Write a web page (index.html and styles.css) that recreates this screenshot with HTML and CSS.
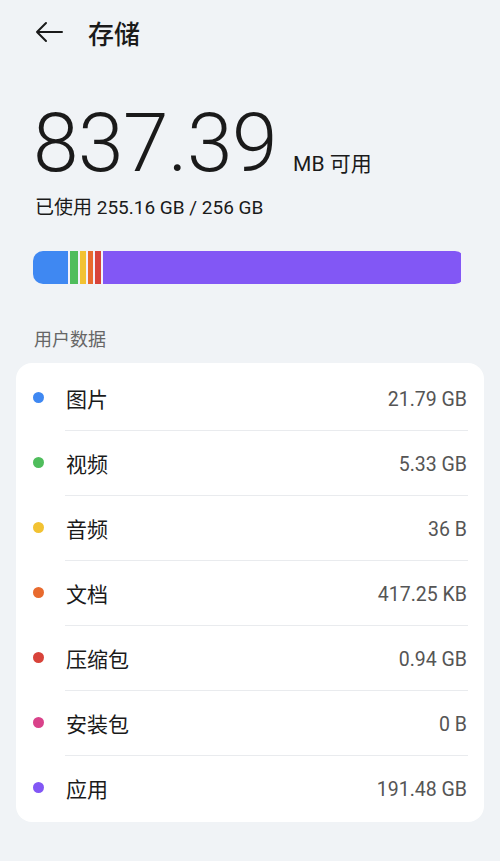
FILE: index.html
```html
<!DOCTYPE html>
<html lang="zh-CN">
<head>
    <meta charset="UTF-8">
    <meta name="viewport" content="width=device-width, initial-scale=1.0">
    <title>存储</title>
    <link rel="stylesheet" href="styles.css">
</head>
<body>
    <div id="app">
        <div class="header">
            <svg class="back" width="28" height="22" viewBox="0 0 28 22">
                <path d="M27 11H2M11 2L2 11L11 20" fill="none" stroke="#1a1a1a" stroke-width="2" stroke-linecap="round" stroke-linejoin="round"/>
            </svg>
            <h1>存储</h1>
        </div>

        <div class="summary">
            <div class="free">
                <span class="free-num">837.39</span>
                <span class="free-unit">MB 可用</span>
            </div>
            <p class="used">已使用 255.16 GB / 256 GB</p>
        </div>

        <div class="bar">
            <span class="seg" style="width: 35px; background: #3f88f2;"></span>
            <span class="seg" style="width: 8px; background: #4fbd5c;"></span>
            <span class="seg" style="width: 6px; background: #f2c232;"></span>
            <span class="seg" style="width: 5px; background: #e86a2e;"></span>
            <span class="seg" style="width: 6px; background: #d8433a;"></span>
            <span class="seg" style="width: 358px; background: #8257f5;"></span>
        </div>

        <p class="section-title">用户数据</p>

        <div class="card">
            <div class="row"><span class="dot" style="background: #3f88f2;"></span><span class="label">图片</span><span class="value">21.79 GB</span></div>
            <div class="row"><span class="dot" style="background: #4fbd5c;"></span><span class="label">视频</span><span class="value">5.33 GB</span></div>
            <div class="row"><span class="dot" style="background: #f2c232;"></span><span class="label">音频</span><span class="value">36 B</span></div>
            <div class="row"><span class="dot" style="background: #e86a2e;"></span><span class="label">文档</span><span class="value">417.25 KB</span></div>
            <div class="row"><span class="dot" style="background: #d8433a;"></span><span class="label">压缩包</span><span class="value">0.94 GB</span></div>
            <div class="row"><span class="dot" style="background: #d9428a;"></span><span class="label">安装包</span><span class="value">0 B</span></div>
            <div class="row"><span class="dot" style="background: #8257f5;"></span><span class="label">应用</span><span class="value">191.48 GB</span></div>
        </div>
    </div>
</body>
</html>
```

FILE: styles.css
```css
/* General Styles */
body {
    font-family: Roboto, "Noto Sans CJK SC", sans-serif;
    background-color: #f0f3f6;
    color: #1a1a1a;
    margin: 0;
    padding: 0;
}

#app {
    width: 500px;
    height: 861px;
    box-sizing: border-box;
    padding: 0 16px;
}

.header {
    display: flex;
    align-items: center;
    height: 64px;
    padding-left: 19px;
}

.back {
    display: block;
    margin-right: 25px;
}

h1 {
    margin: 0;
    font-size: 26px;
    font-weight: 500;
    font-family: "Noto Sans CJK SC", sans-serif;
}

.summary {
    padding: 32px 0 0 19px;
}

.free {
    display: flex;
    align-items: baseline;
    height: 94px;
}

.free-num {
    margin-left: -2px;
    font-size: 82px;
    font-weight: 300;
    letter-spacing: -0.5px;
    line-height: 94px;
}

.free-unit {
    margin-left: 16px;
    font-size: 21px;
}

.used {
    margin: 6px 0 0;
    font-size: 19px;
    line-height: 24px;
}

.bar {
    display: flex;
    gap: 2px;
    height: 33px;
    margin: 31px 19px 0 17px;
    background-color: #f3f1fb;
    border-radius: 10px;
    overflow: hidden;
}

.seg {
    display: block;
    height: 100%;
}

.section-title {
    margin: 44px 0 0 18px;
    font-size: 18px;
    line-height: 24px;
    color: #666666;
}

.card {
    margin-top: 11px;
    padding: 2px 0;
    background-color: #ffffff;
    border-radius: 16px;
}

.row {
    display: flex;
    align-items: center;
    height: 65px;
    position: relative;
}

.row + .row::before {
    content: "";
    position: absolute;
    top: 0;
    left: 49px;
    right: 16px;
    height: 1px;
    background-color: #e9ebee;
}

.dot {
    width: 11px;
    height: 11px;
    border-radius: 50%;
    margin: 0 22px 0 17px;
}

.label {
    flex: 1;
    font-size: 21px;
    font-family: "Noto Sans CJK SC", sans-serif;
}

.value {
    margin-right: 17px;
    padding-top: 3px;
    font-size: 19.5px;
    color: #555555;
}
```
